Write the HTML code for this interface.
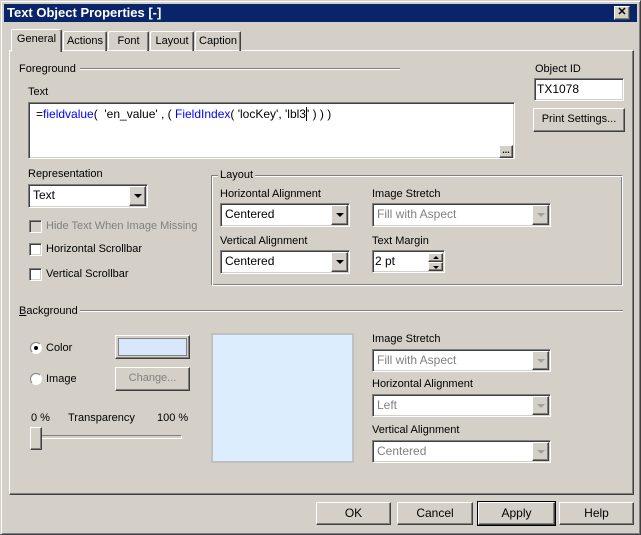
<!DOCTYPE html>
<html><head><meta charset="utf-8"><style>
*{box-sizing:border-box;margin:0;padding:0}
body{width:641px;height:535px;background:#d4d0c8;font-family:"Liberation Sans",Arial,sans-serif;font-size:11px;color:#000;position:relative;overflow:hidden}
.a{position:absolute;white-space:nowrap}
.win{position:absolute;left:0;top:0;width:641px;height:535px;border:1px solid;border-color:#d4d0c8 #404040 #404040 #d4d0c8;box-shadow:inset 1px 1px 0 #fff,inset -1px -1px 0 #808080}
.title{position:absolute;left:4px;top:4px;width:633px;height:18px;background:#0a246a;color:#fff;font-weight:bold;font-size:13px;line-height:18px;padding-left:3px}
.sunk{position:absolute;background:#fff;border:1px solid;border-color:#808080 #fff #fff #808080;box-shadow:inset 1px 1px 0 #404040,inset -1px -1px 0 #d4d0c8}
.btn{position:absolute;background:#d4d0c8;border:1px solid;border-color:#fff #404040 #404040 #fff;box-shadow:inset -1px -1px 0 #808080;text-align:center}
.tab{position:absolute;top:31px;height:20px;border:1px solid;border-bottom:none;border-color:#fff #404040 #404040 #fff;box-shadow:inset -1px 0 0 #808080;border-radius:2px 2px 0 0;padding:3px 0 0 0;text-align:center}
.sel .arrow{position:absolute;right:1px;top:1px;bottom:1px;width:17px;background:#d4d0c8;border:1px solid;border-color:#fff #404040 #404040 #fff;box-shadow:inset -1px -1px 0 #808080}
.arrow:after{content:"";position:absolute;left:4px;top:7px;border-left:4px solid transparent;border-right:4px solid transparent;border-top:4px solid #000}
.dis .arrow:after{border-top-color:#a0a0a0}
.sel span{position:absolute;left:4px;top:3px;font-size:12px}
.dis span{color:#808080}
.cb{position:absolute;width:13px;height:13px;background:#fff;border:1px solid;border-color:#808080 #fff #fff #808080;box-shadow:inset 1px 1px 0 #404040,inset -1px -1px 0 #d4d0c8}
.rd{position:absolute;width:12px;height:12px;border-radius:50%;background:#fff;border:1px solid;border-color:#808080 #fff #fff #808080}
.ln{position:absolute;height:2px;border-top:1px solid #808080;border-bottom:1px solid #fff}
.gray{color:#808080}
</style></head><body>
<div class="win"></div>
<div class="title">Text Object Properties [-]</div>
<div class="btn" style="left:614px;top:6px;width:16px;height:14px;font-size:11px;font-weight:bold;line-height:11px">✕</div>

<div class="a" style="left:9px;top:50px;width:625px;height:445px;border:1px solid;border-color:#fff #404040 #404040 #fff;box-shadow:inset -1px -1px 0 #808080"></div>
<div class="tab" style="left:63px;width:44px">Actions</div>
<div class="tab" style="left:108px;width:41px">Font</div>
<div class="tab" style="left:150px;width:44px">Layout</div>
<div class="tab" style="left:195px;width:46px">Caption</div>
<div class="tab" style="left:11px;top:29px;height:23px;width:51px;background:#d4d0c8">General</div>

<div class="a" style="left:19px;top:63px">Foreground</div>
<div class="ln" style="left:80px;top:68px;width:320px"></div>
<div class="a" style="left:28px;top:86px">Text</div>
<div class="sunk" style="left:28px;top:102px;width:487px;height:57px"></div>
<div class="a" style="left:36px;top:107px;font-size:12px">=<span style="color:#0000ff">fieldvalue</span>(&nbsp; 'en_value' , ( <span style="color:#0000ff">FieldIndex</span>( 'locKey', 'lbl3<span style="border-left:1px solid #000"></span>' ) ) )</div>
<div class="btn" style="left:499px;top:145px;width:14px;height:13px;font-size:9px;font-weight:bold;line-height:8px">...</div>

<div class="a" style="left:535px;top:63px">Object ID</div>
<div class="sunk" style="left:534px;top:78px;width:90px;height:23px"></div>
<div class="a" style="left:537px;top:82px;font-size:12px">TX1078</div>
<div class="btn" style="left:533px;top:108px;width:92px;height:24px;line-height:21px">Print Settings...</div>

<div class="a" style="left:28px;top:168px">Representation</div>
<div class="sunk sel" style="left:28px;top:184px;width:120px;height:24px"><span>Text</span><div class="arrow"></div></div>

<div class="cb" style="left:29px;top:220px;background:#d4d0c8"></div><div class="a gray" style="left:46px;top:220px">Hide Text When Image Missing</div>
<div class="cb" style="left:29px;top:243px"></div><div class="a" style="left:46px;top:243px">Horizontal Scrollbar</div>
<div class="cb" style="left:29px;top:268px"></div><div class="a" style="left:46px;top:268px">Vertical Scrollbar</div>

<div class="a" style="left:211px;top:175px;width:412px;height:111px;border:1px solid;border-color:#808080 #fff #fff #808080;box-shadow:inset 1px 1px 0 #fff,inset -1px -1px 0 #808080"></div>
<div class="a" style="left:218px;top:169px;background:#d4d0c8;padding:0 2px">Layout</div>
<div class="a" style="left:220px;top:188px">Horizontal Alignment</div>
<div class="sunk sel" style="left:220px;top:203px;width:130px;height:24px"><span>Centered</span><div class="arrow"></div></div>
<div class="a" style="left:220px;top:235px">Vertical Alignment</div>
<div class="sunk sel" style="left:220px;top:250px;width:130px;height:24px"><span>Centered</span><div class="arrow"></div></div>
<div class="a" style="left:372px;top:188px">Image Stretch</div>
<div class="sunk sel dis" style="left:372px;top:203px;width:179px;height:24px"><span>Fill with Aspect</span><div class="arrow"></div></div>
<div class="a" style="left:372px;top:235px">Text Margin</div>
<div class="sunk" style="left:372px;top:250px;width:73px;height:23px"></div>
<div class="a" style="left:375px;top:254px;font-size:12px">2 pt</div>
<div class="btn" style="left:428px;top:253px;width:15px;height:9px"><div style="position:absolute;left:4px;top:2px;border-left:3px solid transparent;border-right:3px solid transparent;border-bottom:3px solid #000"></div></div>
<div class="btn" style="left:428px;top:262px;width:15px;height:9px"><div style="position:absolute;left:4px;top:3px;border-left:3px solid transparent;border-right:3px solid transparent;border-top:3px solid #000"></div></div>

<div class="a" style="left:19px;top:305px"><u>B</u>ackground</div>
<div class="ln" style="left:80px;top:310px;width:543px"></div>

<div class="rd" style="left:30px;top:342px"></div><div class="a" style="left:34px;top:346px;width:4px;height:4px;background:#000;border-radius:50%"></div>
<div class="a" style="left:46px;top:342px">Color</div>
<div class="btn" style="left:115px;top:335px;width:75px;height:24px;padding:2px"><div style="width:100%;height:100%;border:1px solid #808080;background:#d9e7fc"></div></div>
<div class="rd" style="left:30px;top:373px"></div><div class="a" style="left:46px;top:373px">Image</div>
<div class="btn gray" style="left:115px;top:367px;width:75px;height:24px;line-height:21px">Change...</div>
<div class="a" style="left:31px;top:412px">0 %</div>
<div class="a" style="left:68px;top:412px">Transparency</div>
<div class="a" style="left:157px;top:412px">100 %</div>
<div class="a" style="left:33px;top:435px;width:149px;height:4px;border:1px solid;border-color:#808080 #fff #fff #808080"></div>
<div class="btn" style="left:30px;top:427px;width:12px;height:23px"></div>

<div class="a" style="left:211px;top:333px;width:143px;height:130px;border:2px solid #c0c0c0;background:#dceefe"></div>

<div class="a" style="left:372px;top:333px">Image Stretch</div>
<div class="sunk sel dis" style="left:372px;top:349px;width:179px;height:23px"><span>Fill with Aspect</span><div class="arrow"></div></div>
<div class="a" style="left:372px;top:378px">Horizontal Alignment</div>
<div class="sunk sel dis" style="left:372px;top:394px;width:179px;height:23px"><span>Left</span><div class="arrow"></div></div>
<div class="a" style="left:372px;top:424px">Vertical Alignment</div>
<div class="sunk sel dis" style="left:372px;top:440px;width:179px;height:23px"><span>Centered</span><div class="arrow"></div></div>

<div class="btn" style="left:316px;top:502px;width:75px;height:23px;line-height:20px;font-size:12px">OK</div>
<div class="btn" style="left:397px;top:502px;width:76px;height:23px;line-height:20px;font-size:12px">Cancel</div>
<div class="btn" style="left:478px;top:502px;width:77px;height:23px;line-height:20px;font-size:12px;outline:1px solid #000">Apply</div>
<div class="btn" style="left:559px;top:502px;width:75px;height:23px;line-height:20px;font-size:12px">Help</div>
</body></html>
